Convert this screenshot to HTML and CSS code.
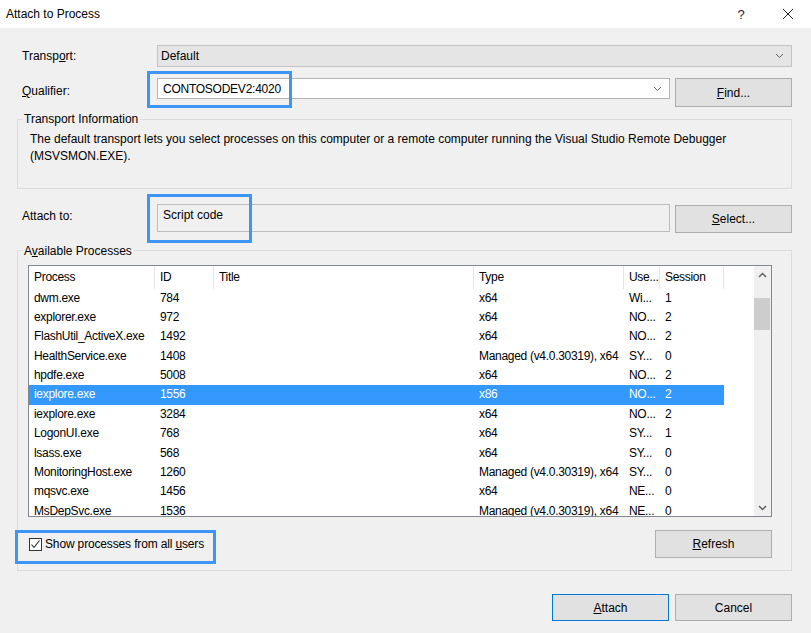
FILE: index.html
```html
<!DOCTYPE html>
<html>
<head>
<meta charset="utf-8">
<title>Attach to Process</title>
<link rel="stylesheet" href="styles.css">
</head>
<body>
<div class="dialog">
  <div class="titlebar">
    <span class="title">Attach to Process</span>
    <span class="tb-btn help">?</span>
    <span class="tb-btn close"><svg width="12" height="12" viewBox="0 0 12 12"><path d="M1 1L11 11M11 1L1 11" stroke="#222" stroke-width="1" fill="none"/></svg></span>
  </div>
  <div class="content">
    <div class="row row-transport">
      <span class="lbl">Transp<u>o</u>rt:</span>
      <div class="combo combo-disabled"><span class="combo-text">Default</span><svg class="chev" width="9" height="6" viewBox="0 0 9 6"><path d="M1 1L4.5 4.5L8 1" stroke="#606060" stroke-width="1" fill="none"/></svg></div>
    </div>
    <div class="row row-qual">
      <span class="lbl lbl-qual"><u>Q</u>ualifier:</span>
      <div class="combo combo-edit"><span class="combo-text edit-text">CONTOSODEV2:4020</span><svg class="chev" width="9" height="6" viewBox="0 0 9 6"><path d="M1 1L4.5 4.5L8 1" stroke="#606060" stroke-width="1" fill="none"/></svg><span class="hl hl-qual"></span></div>
      <button class="btn btn-find"><u>F</u>ind...</button>
    </div>
    <fieldset class="group group-info">
      <legend>Transport Information</legend>
      <p class="desc">The default transport lets you select processes on this computer or a remote computer running the Visual Studio Remote Debugger (MSVSMON.EXE).</p>
    </fieldset>
    <div class="row row-attach">
      <span class="lbl lbl-attach">Attach to:</span>
      <div class="field"><span class="field-text">Script code</span><span class="hl hl-attach"></span></div>
      <button class="btn btn-select"><u>S</u>elect...</button>
    </div>
    <fieldset class="group group-procs">
      <legend>A<u>v</u>ailable Processes</legend>
      <div class="procs-inner">
        <div class="lv">
          <div class="lv-main">
            <div class="lv-row lv-head">
              <span class="c c1">Process</span><span class="c c2">ID</span><span class="c c3">Title</span><span class="c c4">Type</span><span class="c c5">Use...</span><span class="c c6">Session</span>
            </div>
            <div class="lv-row"><span class="c c1">dwm.exe</span><span class="c c2">784</span><span class="c c3"></span><span class="c c4">x64</span><span class="c c5">Wi...</span><span class="c c6">1</span></div>
            <div class="lv-row"><span class="c c1">explorer.exe</span><span class="c c2">972</span><span class="c c3"></span><span class="c c4">x64</span><span class="c c5">NO...</span><span class="c c6">2</span></div>
            <div class="lv-row"><span class="c c1">FlashUtil_ActiveX.exe</span><span class="c c2">1492</span><span class="c c3"></span><span class="c c4">x64</span><span class="c c5">NO...</span><span class="c c6">2</span></div>
            <div class="lv-row"><span class="c c1">HealthService.exe</span><span class="c c2">1408</span><span class="c c3"></span><span class="c c4">Managed (v4.0.30319), x64</span><span class="c c5">SY...</span><span class="c c6">0</span></div>
            <div class="lv-row"><span class="c c1">hpdfe.exe</span><span class="c c2">5008</span><span class="c c3"></span><span class="c c4">x64</span><span class="c c5">NO...</span><span class="c c6">2</span></div>
            <div class="lv-row sel"><span class="c c1">iexplore.exe</span><span class="c c2">1556</span><span class="c c3"></span><span class="c c4">x86</span><span class="c c5">NO...</span><span class="c c6">2</span></div>
            <div class="lv-row"><span class="c c1">iexplore.exe</span><span class="c c2">3284</span><span class="c c3"></span><span class="c c4">x64</span><span class="c c5">NO...</span><span class="c c6">2</span></div>
            <div class="lv-row"><span class="c c1">LogonUI.exe</span><span class="c c2">768</span><span class="c c3"></span><span class="c c4">x64</span><span class="c c5">SY...</span><span class="c c6">1</span></div>
            <div class="lv-row"><span class="c c1">lsass.exe</span><span class="c c2">568</span><span class="c c3"></span><span class="c c4">x64</span><span class="c c5">SY...</span><span class="c c6">0</span></div>
            <div class="lv-row"><span class="c c1">MonitoringHost.exe</span><span class="c c2">1260</span><span class="c c3"></span><span class="c c4">Managed (v4.0.30319), x64</span><span class="c c5">SY...</span><span class="c c6">0</span></div>
            <div class="lv-row"><span class="c c1">mqsvc.exe</span><span class="c c2">1456</span><span class="c c3"></span><span class="c c4">x64</span><span class="c c5">NE...</span><span class="c c6">0</span></div>
            <div class="lv-row"><span class="c c1">MsDepSvc.exe</span><span class="c c2">1536</span><span class="c c3"></span><span class="c c4">Managed (v4.0.30319), x64</span><span class="c c5">NE...</span><span class="c c6">0</span></div>
          </div>
          <div class="lv-scroll">
            <span class="sb-arrow"><svg width="9" height="6" viewBox="0 0 9 6"><path d="M1 5L4.5 1.5L8 5" stroke="#606060" stroke-width="1.5" fill="none"/></svg></span>
            <span class="sb-thumb"></span>
            <span class="sb-space"></span>
            <span class="sb-arrow"><svg width="9" height="6" viewBox="0 0 9 6"><path d="M1 1L4.5 4.5L8 1" stroke="#606060" stroke-width="1.5" fill="none"/></svg></span>
          </div>
        </div>
        <div class="procs-bottom">
          <label class="chk">
            <span class="chk-box"><svg width="11" height="11" viewBox="0 0 11 11"><path d="M1.5 5.5L4 8.5L9.5 1.5" stroke="#222" stroke-width="1.1" fill="none"/></svg></span>
            <span class="chk-text">Show processes from all <u>u</u>sers</span>
          </label>
          <span class="hl hl-chk"></span>
          <button class="btn btn-refresh"><u>R</u>efresh</button>
        </div>
      </div>
    </fieldset>
    <div class="footer">
      <button class="btn btn-default"><u>A</u>ttach</button>
      <button class="btn btn-cancel">Cancel</button>
    </div>
  </div>
</div>
</body>
</html>
```

FILE: styles.css
```css
* { box-sizing: border-box; }
html, body { margin: 0; padding: 0; }
body {
  width: 811px;
  height: 633px;
  overflow: hidden;
  background: #f0f0f0;
  font-family: "Liberation Sans", Arial, sans-serif;
  font-size: 12px;
  color: #000;
}
u { text-decoration: underline; text-underline-offset: 1px; }

.dialog { width: 811px; height: 633px; }

.titlebar {
  height: 28px;
  background: #fff;
  display: flex;
  align-items: center;
  padding-left: 6px;
}
.title { flex: 1; font-size: 12px; }
.tb-btn {
  height: 28px;
  display: flex;
  align-items: center;
  justify-content: center;
}
.help { width: 46px; font-size: 13px; color: #222; }
.close { width: 47px; }

.content { padding: 0 19px 0 17px; }

.row { display: grid; position: relative; }
.lbl { padding-left: 5px; line-height: 14px; }

.row-transport {
  grid-template-columns: 140px 1fr;
  margin-top: 17px;
  height: 22px;
  align-items: center;
}
.combo {
  position: relative;
  height: 22px;
  display: flex;
  align-items: center;
  justify-content: space-between;
  border: 1px solid #c4c4c4;
  background: #e5e5e5;
}
.combo-text { padding-left: 3px; }
.chev { margin-right: 7px; }
.combo-edit { background: #fff; border-color: #b5b5b5; height: 21px; }
.edit-text { padding-left: 5px; letter-spacing: -0.25px; }

.row-qual {
  grid-template-columns: 135px 1fr 117px;
  column-gap: 5px;
  margin-top: 11px;
  align-items: start;
}
.lbl-qual { padding-top: 6px; }

.btn {
  font-family: inherit;
  font-size: 12px;
  color: #000;
  background: #e1e1e1;
  border: 1px solid #adadad;
  padding: 0;
  margin: 0;
  height: 28px;
}
.btn-find { height: 29px; }

.hl {
  position: absolute;
  border: 3px solid #3d96f5;
  pointer-events: none;
}
.hl-qual { left: -11px; top: -8px; width: 145px; height: 37px; }

.group {
  margin: 0;
  border: 1px solid #dcdcdc;
  padding: 0 0 0 5px;
  min-width: 0;
}
.group legend {
  padding: 0 2px 0 1px;
  line-height: 16px;
  font-size: 12px;
}
.group-info { margin-top: 4px; height: 78px; }
.desc {
  margin: 4px 0 0 7px;
  line-height: 17px;
}

.row-attach {
  grid-template-columns: 135px 1fr 117px;
  column-gap: 5px;
  margin-top: 15px;
  align-items: start;
}
.lbl-attach { padding-top: 5px; }
.field {
  position: relative;
  height: 28px;
  border: 1px solid #bcbcbc;
  background: #f0f0f0;
  padding: 2px 5px;
  line-height: 16px;
}
.hl-attach { left: -11px; top: -11px; width: 105px; height: 49px; }
.btn-select { margin-top: 1px; }

.group-procs { margin-top: 9px; height: 329px; }
.group-procs legend { padding-top: 1px; }
.procs-inner { margin-left: 5px; margin-top: 6px; margin-right: 19px; }

.lv {
  height: 252px;
  border: 1px solid #828790;
  background: #fff;
  display: flex;
  letter-spacing: -0.3px;
}
.lv-main { flex: 1; overflow: hidden; }
.lv-row {
  display: flex;
  height: 19.4px;
  line-height: 19.4px;
  width: 695px;
  white-space: nowrap;
}
.lv-head { height: 22.5px; line-height: 23px; }
.c { padding-left: 5px; overflow: hidden; flex: none; }
.lv-head .c { border-right: 1px solid #e5e5e5; }
.c1 { width: 126px; }
.c2 { width: 59px; }
.c3 { width: 260px; }
.c4 { width: 150px; }
.c5 { width: 36px; }
.c6 { width: 64px; }
.lv-row.sel { background: #3399ff; color: #fff; }

.lv-scroll {
  width: 17px;
  background: #f0f0f0;
  display: flex;
  flex-direction: column;
}
.sb-arrow {
  height: 17px;
  display: flex;
  align-items: center;
  justify-content: center;
  flex: none;
}
.sb-thumb {
  height: 32px;
  margin: 15px 1px 0 0;
  background: #cdcdcd;
  flex: none;
}
.sb-space { flex: 1; }

.procs-bottom {
  position: relative;
  margin-top: 13px;
  display: flex;
  justify-content: space-between;
  align-items: center;
  height: 28px;
}
.chk { display: flex; align-items: center; margin-left: 1px; }
.chk-box {
  width: 13px;
  height: 13px;
  border: 1px solid #333;
  background: #fff;
  display: flex;
  align-items: center;
  justify-content: center;
  margin-right: 3px;
}
.chk-text { letter-spacing: -0.15px; }
.hl-chk { left: -13px; top: 0; width: 201px; height: 34px; }
.btn-refresh { width: 117px; }

.footer {
  display: flex;
  justify-content: flex-end;
  gap: 6px;
  margin-top: 23px;
}
.footer .btn { width: 117px; height: 27px; }
.btn-default { width: 116px; border-color: #0078d7; }
```
